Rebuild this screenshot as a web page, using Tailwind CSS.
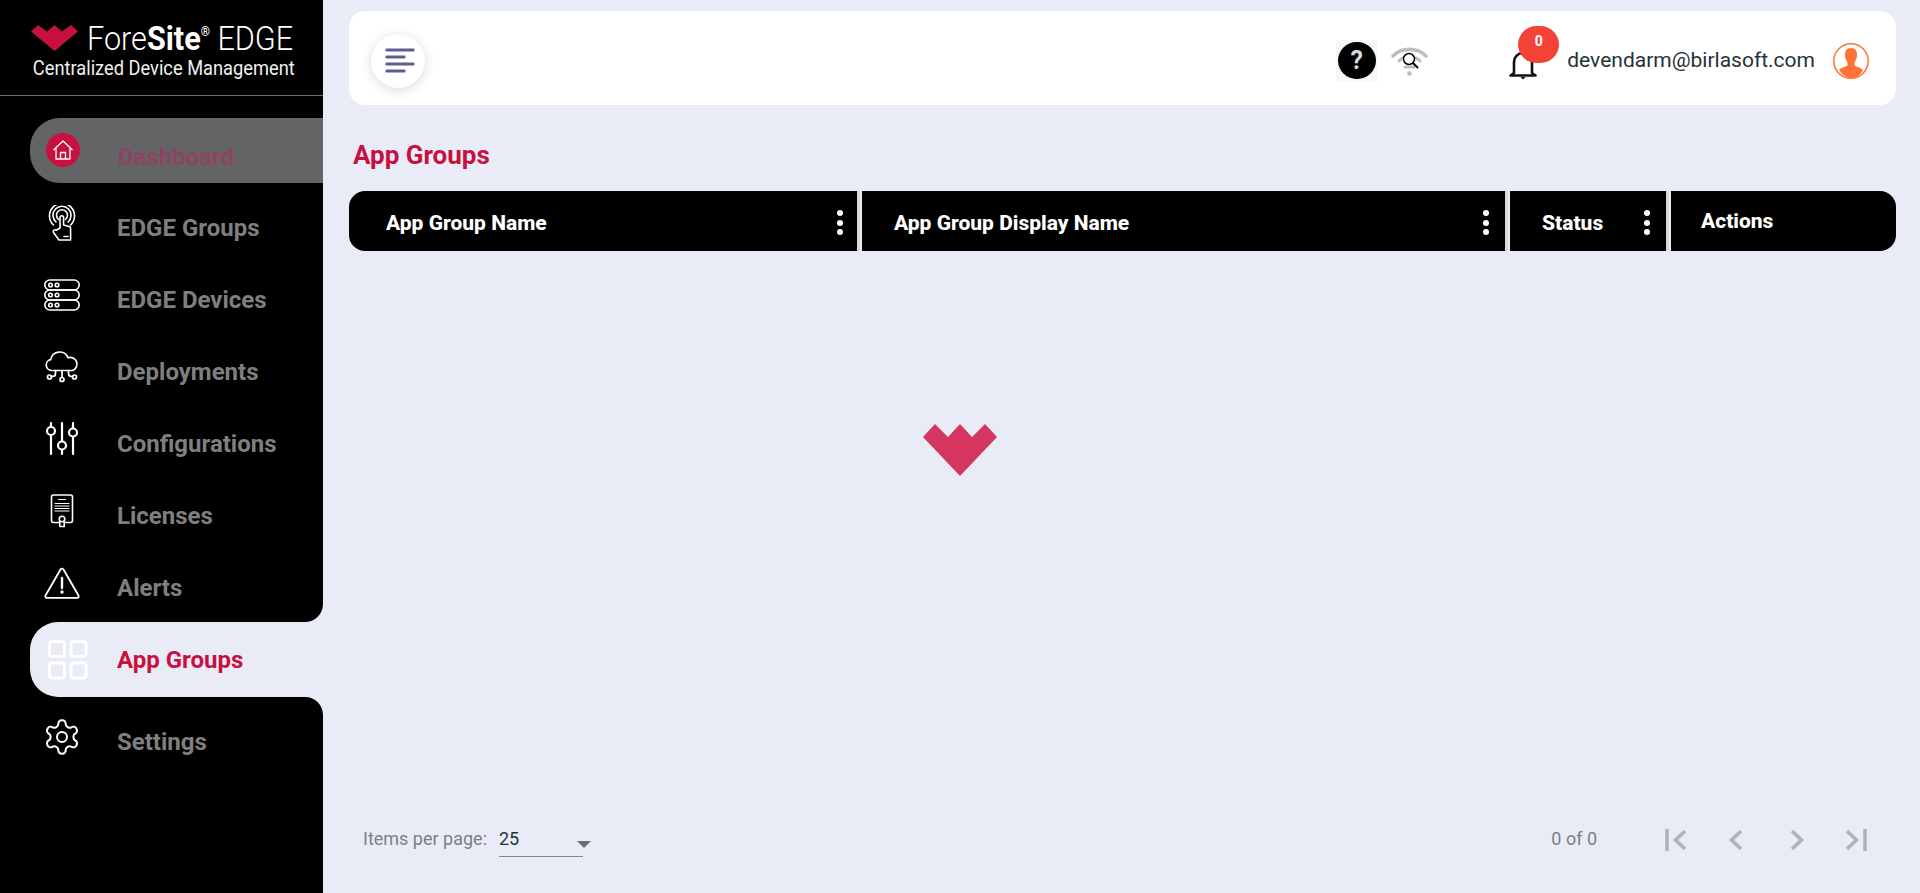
<!DOCTYPE html>
<html>
<head>
<meta charset="utf-8">
<script src="https://cdn.jsdelivr.net/npm/@tailwindcss/browser@4"></script>
</head>
<body class="m-0 bg-[#e9ecf7] font-['Roboto',sans-serif]">
<div class="relative flex h-[893px] w-[1920px] overflow-hidden bg-[#e9ecf7]">
  <aside class="flex h-full w-[323px] shrink-0 flex-col">
    <div class="h-[622px] rounded-br-[18px] bg-black">
      <div class="h-[96px] border-b border-[#6f6f6f] pl-[31px] pt-[23px]">
        <div class="flex h-[30px] items-center">
          <svg class="mr-[9px] h-[26px] w-[47px] shrink-0" viewBox="0 0 47 26"><polygon points="0,6.5 7,0 16,6.5 23.5,0 31,6.5 40,0 47,6.5 23.5,26" fill="#c8103f"/></svg>
          <span class="origin-left scale-x-[0.9] whitespace-nowrap text-[34px] font-light leading-[30px] text-white">Fore<b class="font-bold">Site</b><span class="relative top-[-14px] text-[13px] font-bold leading-none">®</span> EDGE</span>
        </div>
        <div class="mt-[4px] origin-left scale-x-[0.913] whitespace-nowrap pl-[2px] text-[20px] leading-[22px] text-[#f0f0f0]">Centralized Device Management</div>
      </div>
      <div class="ml-[30px] mt-[22px] flex h-[65px] items-center rounded-l-[30px] bg-[#636466] pl-[16px]">
        <div class="mb-[1px] flex h-[34px] w-[34px] items-center justify-center rounded-full bg-[#c8103f]">
          <svg class="h-[22px] w-[22px]" viewBox="0 0 22 22" fill="none" stroke="#fff" stroke-width="1.3" stroke-linejoin="round"><path d="M1.5 11 11 2l9.5 9M4 9v11h14V9M8.5 20v-6.5h5V20"/></svg>
        </div>
        <span class="ml-[38px] pt-[12px] text-[24px] font-bold text-[#8e4460]">Dashboard</span>
      </div>
      <div class="mt-[9px]">
        <div class="flex h-[72px] items-center pl-[44px]">
          <div class="flex h-[46px] w-[36px] items-start justify-center">
            <svg class="h-[36px] w-[36px]" viewBox="0 0 36 36" fill="none" stroke="#fff" stroke-width="1.6" stroke-linecap="round" stroke-linejoin="round"><path d="M9.5 20a12.5 12.5 0 1 1 17 0M12 17a9 9 0 1 1 12 0M14.5 14.5a5.5 5.5 0 1 1 7 0"/><path d="M16 23v-10.500a1.800 1.800 0 0 1 3.600 0V20l5.600 1.500a2 2 0 0 1 1.400 2V35H15l-5.500-7.500a1.800 1.800 0 0 1 2.800-2.200z"/><path d="M20 31.500h4"/></svg>
          </div>
          <span class="ml-[37px] text-[24px] font-bold text-[#7f7f7f]">EDGE Groups</span>
        </div>
        <div class="flex h-[72px] items-center pl-[44px]">
          <div class="flex h-[46px] w-[36px] items-start justify-center">
            <svg class="h-[36px] w-[36px]" viewBox="0 0 36 36" fill="none" stroke="#fff" stroke-width="1.600"><rect x="0.800" y="3" width="34.400" height="10" rx="5"/><rect x="0.800" y="13" width="34.400" height="10" rx="5"/><rect x="0.800" y="23" width="34.400" height="10" rx="5"/><circle cx="6.500" cy="8" r="1.800"/><circle cx="13" cy="8" r="1.800"/><circle cx="6.500" cy="18" r="1.800"/><circle cx="13" cy="18" r="1.800"/><circle cx="6.500" cy="28" r="1.800"/><circle cx="13" cy="28" r="1.800"/></svg>
          </div>
          <span class="ml-[37px] text-[24px] font-bold text-[#7f7f7f]">EDGE Devices</span>
        </div>
        <div class="flex h-[72px] items-center pl-[44px]">
          <div class="flex h-[46px] w-[36px] items-start justify-center">
            <svg class="h-[36px] w-[36px]" viewBox="0 0 36 36" fill="none" stroke="#fff" stroke-width="1.700" stroke-linecap="round" stroke-linejoin="round"><path d="M8 21.500h-.5a5.500 5.500 0 0 1-.8-10.900A9 9 0 0 1 24 8.800a6.500 6.500 0 0 1 4.500 12.700H27"/><path d="M9.500 21.500H26.500"/><path d="M11.500 21.500v3a3 3 0 0 1-3 3H7M18 21.500v7M24.500 21.500v3a3 3 0 0 0 3 3H29"/><circle cx="5.500" cy="28" r="2"/><circle cx="18" cy="30.500" r="2"/><circle cx="30.500" cy="28" r="2"/></svg>
          </div>
          <span class="ml-[37px] text-[24px] font-bold text-[#7f7f7f]">Deployments</span>
        </div>
        <div class="flex h-[72px] items-center pl-[44px]">
          <div class="flex h-[46px] w-[36px] items-start justify-center">
            <svg class="h-[36px] w-[36px]" viewBox="0 0 36 36" fill="none" stroke="#fff" stroke-width="2.200" stroke-linecap="round"><path d="M7 2v3M7 15v18M18 2v18M18 29v4M29 2v5M29 16v17"/><circle cx="7" cy="10" r="4"/><circle cx="18" cy="24.500" r="4"/><circle cx="29" cy="11.500" r="4"/></svg>
          </div>
          <span class="ml-[37px] text-[24px] font-bold text-[#7f7f7f]">Configurations</span>
        </div>
        <div class="flex h-[72px] items-center pl-[44px]">
          <div class="flex h-[46px] w-[36px] items-start justify-center">
            <svg class="h-[36px] w-[36px]" viewBox="0 0 36 36" fill="none" stroke="#fff" stroke-width="1.600" stroke-linecap="round" stroke-linejoin="round"><path d="M15 29.500H9.500a2 2 0 0 1-2-2V4a2 2 0 0 1 2-2h17a2 2 0 0 1 2 2v23.500a2 2 0 0 1-2 2H21"/><path d="M14.500 6.500h7M11 10.500h14M11 13h14M11 15.500h14M11 18h14" stroke-width="1.200"/><circle cx="18" cy="26" r="2.800"/><path d="M15.800 28v5.500h4.400V28"/></svg>
          </div>
          <span class="ml-[37px] text-[24px] font-bold text-[#7f7f7f]">Licenses</span>
        </div>
        <div class="flex h-[72px] items-center pl-[44px]">
          <div class="flex h-[46px] w-[36px] items-start justify-center">
            <svg class="h-[36px] w-[36px]" viewBox="0 0 36 36" fill="none" stroke="#fff" stroke-width="1.800" stroke-linecap="round" stroke-linejoin="round"><path d="M16.500 4.500a1.800 1.800 0 0 1 3 0l15 26a1.500 1.500 0 0 1-1.300 2.300H2.800a1.500 1.500 0 0 1-1.300-2.300z"/><path d="M18 13v10" stroke-width="2.400"/><circle cx="18" cy="27" r="0.800" fill="#fff"/></svg>
          </div>
          <span class="ml-[37px] text-[24px] font-bold text-[#7f7f7f]">Alerts</span>
        </div>
      </div>
    </div>
    <div class="h-[75px] bg-black pl-[30px]">
      <div class="flex h-full items-center rounded-l-[28px] bg-[#e9ecf7] pl-[18px]">
        <svg class="h-[40px] w-[40px] shrink-0" viewBox="0 0 40 40" fill="none" stroke="#fff" stroke-width="3"><rect x="1.500" y="1.500" width="15" height="15" rx="2.500"/><rect x="23" y="1.500" width="15" height="15" rx="2.500"/><rect x="1.500" y="23" width="15" height="15" rx="2.500"/><rect x="23" y="23" width="15" height="15" rx="2.500"/></svg>
        <span class="ml-[29px] text-[24px] font-bold text-[#c8103f]">App Groups</span>
      </div>
    </div>
    <div class="flex-1 rounded-tr-[18px] bg-black pt-[9px]">
      <div class="flex h-[72px] items-center pl-[44px]">
        <div class="flex h-[46px] w-[36px] items-start justify-center">
          <svg class="h-[40px] w-[40px] shrink-0 -translate-y-[2px]" viewBox="0 0 24 24" fill="none" stroke="#fff" stroke-width="1.200" stroke-linecap="round" stroke-linejoin="round"><path d="M12.220 2h-.44a2 2 0 0 0-2 2v.18a2 2 0 0 1-1 1.730l-.43.25a2 2 0 0 1-2 0l-.15-.08a2 2 0 0 0-2.730.730l-.22.380a2 2 0 0 0 .73 2.730l.15.100a2 2 0 0 1 1 1.720v.510a2 2 0 0 1-1 1.740l-.15.090a2 2 0 0 0-.73 2.730l.22.380a2 2 0 0 0 2.730.730l.15-.08a2 2 0 0 1 2 0l.43.25a2 2 0 0 1 1 1.730V20a2 2 0 0 0 2 2h.44a2 2 0 0 0 2-2v-.18a2 2 0 0 1 1-1.730l.43-.25a2 2 0 0 1 2 0l.15.08a2 2 0 0 0 2.730-.73l.22-.39a2 2 0 0 0-.73-2.730l-.15-.08a2 2 0 0 1-1-1.740v-.5a2 2 0 0 1 1-1.740l.15-.09a2 2 0 0 0 .73-2.730l-.22-.38a2 2 0 0 0-2.730-.73l-.15.08a2 2 0 0 1-2 0l-.43-.25a2 2 0 0 1-1-1.730V4a2 2 0 0 0-2-2z"/><circle cx="12" cy="12" r="3"/></svg>
        </div>
        <span class="ml-[37px] text-[24px] font-bold text-[#7f7f7f]">Settings</span>
      </div>
    </div>
  </aside>

  <main class="flex h-full flex-1 flex-col pl-[26px] pr-[24px] pt-[11px]">
    <header class="flex h-[94px] items-center rounded-[16px] bg-white pl-[22px] pr-[27px] pt-[5px]">
      <button class="flex h-[54px] w-[54px] items-center justify-center rounded-full bg-white shadow-[0_2px_12px_rgba(0,0,0,0.15)]">
        <svg class="ml-[3px] h-[26px] w-[30px]" viewBox="0 0 30 26" fill="#575f93"><rect x="0.500" y="0.500" width="29" height="3" rx="1.300"/><rect x="0.500" y="7.500" width="20" height="3" rx="1.300"/><rect x="0.500" y="14.500" width="29" height="3" rx="1.300"/><rect x="0.500" y="21.500" width="20" height="3" rx="1.300"/></svg>
      </button>
      <div class="ml-auto flex h-[42px] w-[41px] items-center justify-center bg-[#f4f7fb]">
        <div class="flex h-[37px] w-[38px] items-center justify-center rounded-full bg-black text-[25px] font-bold leading-none text-[#d9d9d9]">?</div>
      </div>
      <svg class="ml-[14px] h-[30px] w-[37px]" viewBox="0 0 37 30" fill="none"><path d="M2 10C11 1 26 1 35 10" stroke="#bdbdbd" stroke-width="3.500" stroke-linecap="round"/><path d="M8 15c2-2 3-3 4-3M29 15c-2-2-3-3-4-3" stroke="#bdbdbd" stroke-width="3" stroke-linecap="round"/><path d="M14 21h9" stroke="#bdbdbd" stroke-width="3" stroke-linecap="round"/><circle cx="18.500" cy="27.500" r="2.300" fill="#bdbdbd"/><circle cx="18" cy="13" r="5.500" fill="#fff" stroke="#000" stroke-width="1.500"/><path d="m22 17 5 5" stroke="#000" stroke-width="2"/></svg>
      <div class="relative ml-[81px] mt-[8px] h-[30px] w-[28px]">
        <svg class="absolute left-0 top-0 h-[30px] w-[28px]" viewBox="0 0 28 30" fill="none" stroke="#111" stroke-width="2.600" stroke-linejoin="round"><path d="M5 23V12a9 9 0 0 1 18 0v11l3.500 2.500h-25z"/><path d="M11.500 27h5l-2.500 2.500z" fill="#111" stroke="none"/></svg>
        <div class="absolute left-[9px] top-[-24px] flex h-[37px] w-[41px] items-start justify-center rounded-full bg-[#f44336] pt-[6px] text-[14px] font-bold leading-[18px] text-white">0</div>
      </div>
      <span class="ml-[30px] whitespace-nowrap text-[21px] text-[#263238]">devendarm@birlasoft.com</span>
      <svg class="ml-[18px] h-[36px] w-[36px]" viewBox="0 0 36 36"><circle cx="18" cy="18" r="17.200" fill="#fff" stroke="#ff7235" stroke-width="1.500"/><path d="M18 5c-4.500 0-6.500 3.500-6 8 .3 3 1.500 5 2.500 6.500v3c-3 1.500-6.500 2.300-8.500 4.500A17 17 0 0 0 18 35c4.800 0 9-2 12-8-2-2.200-5.500-3-8.500-4.500v-3c1-1.500 2.200-3.500 2.500-6.500.5-4.500-1.500-8-6-8z" fill="#ff7235"/></svg>
    </header>

    <h1 class="mt-[35px] h-[30px] pl-[4px] text-[26px] font-bold leading-[30px] text-[#c8103f]">App Groups</h1>

    <div class="mt-[21px] flex h-[60px] text-[21px] font-extrabold text-white">
      <div class="relative flex w-[508px] items-center rounded-l-[16px] bg-black pl-[37px] pt-[6px]">App Group Name
        <span class="absolute right-[14px] top-[19px] flex flex-col gap-[3.500px]"><i class="h-[6px] w-[6px] rounded-full bg-white"></i><i class="h-[6px] w-[6px] rounded-full bg-white"></i><i class="h-[6px] w-[6px] rounded-full bg-white"></i></span>
      </div>
      <div class="h-full w-[3px] bg-[#d8d8d8]"></div>
      <div class="relative ml-[2px] flex w-[643px] items-center bg-black pl-[32px] pt-[6px]">App Group Display Name
        <span class="absolute right-[16px] top-[19px] flex flex-col gap-[3.500px]"><i class="h-[6px] w-[6px] rounded-full bg-white"></i><i class="h-[6px] w-[6px] rounded-full bg-white"></i><i class="h-[6px] w-[6px] rounded-full bg-white"></i></span>
      </div>
      <div class="h-full w-[3px] bg-[#d8d8d8]"></div>
      <div class="relative ml-[2px] flex w-[156px] items-center bg-black pl-[32px] pt-[6px]">Status
        <span class="absolute right-[16px] top-[19px] flex flex-col gap-[3.500px]"><i class="h-[6px] w-[6px] rounded-full bg-white"></i><i class="h-[6px] w-[6px] rounded-full bg-white"></i><i class="h-[6px] w-[6px] rounded-full bg-white"></i></span>
      </div>
      <div class="h-full w-[3px] bg-[#d8d8d8]"></div>
      <div class="ml-[2px] flex flex-1 items-center rounded-r-[16px] bg-black pl-[30px] pt-[1px]">Actions</div>
    </div>

    <div class="flex-1"></div>

    <footer class="flex h-[80px] items-start pl-[14px]">
      <span class="mt-[16px] text-[18px] leading-[20px] text-[#7c7f86]">Items per page:</span>
      <div class="relative ml-[12px] mt-[7px] flex h-[37px] w-[84px] items-center border-b border-[#85868c] text-[18px] text-[#263238]">25
        <span class="absolute right-[-8px] top-[21px] h-0 w-0 border-x-[7px] border-t-[7px] border-x-transparent border-t-[#6c6d73]"></span>
      </div>
      <span class="ml-auto mt-[16px] text-[18px] leading-[20px] text-[#7c7f86]">0 of 0</span>
      <div class="ml-[67px] mr-[28px] mt-[15px] flex">
        <svg class="h-[24px] w-[24px]" viewBox="0 0 24 24" fill="none" stroke="#b0b1b8" stroke-width="3.500"><path d="M3 1v22M21 3 11.500 12 21 21"/></svg>
        <svg class="ml-[36px] h-[24px] w-[24px]" viewBox="0 0 24 24" fill="none" stroke="#b0b1b8" stroke-width="3.500"><path d="M17 3 7.500 12 17 21"/></svg>
        <svg class="ml-[37px] h-[24px] w-[24px]" viewBox="0 0 24 24" fill="none" stroke="#b0b1b8" stroke-width="3.500"><path d="m7 3 9.500 9L7 21"/></svg>
        <svg class="ml-[35px] h-[24px] w-[24px]" viewBox="0 0 24 24" fill="none" stroke="#b0b1b8" stroke-width="3.500"><path d="M3 3l9.500 9L3 21M21 1v22"/></svg>
      </div>
    </footer>
  </main>

  <svg class="absolute left-[923px] top-[424px] h-[52px] w-[74px]" viewBox="0 0 74 52"><polygon points="0,13 12,0 25,13 37,0 49,13 62,0 74,13 37,52" fill="#d5365f"/></svg>
</div>
</body>
</html>
